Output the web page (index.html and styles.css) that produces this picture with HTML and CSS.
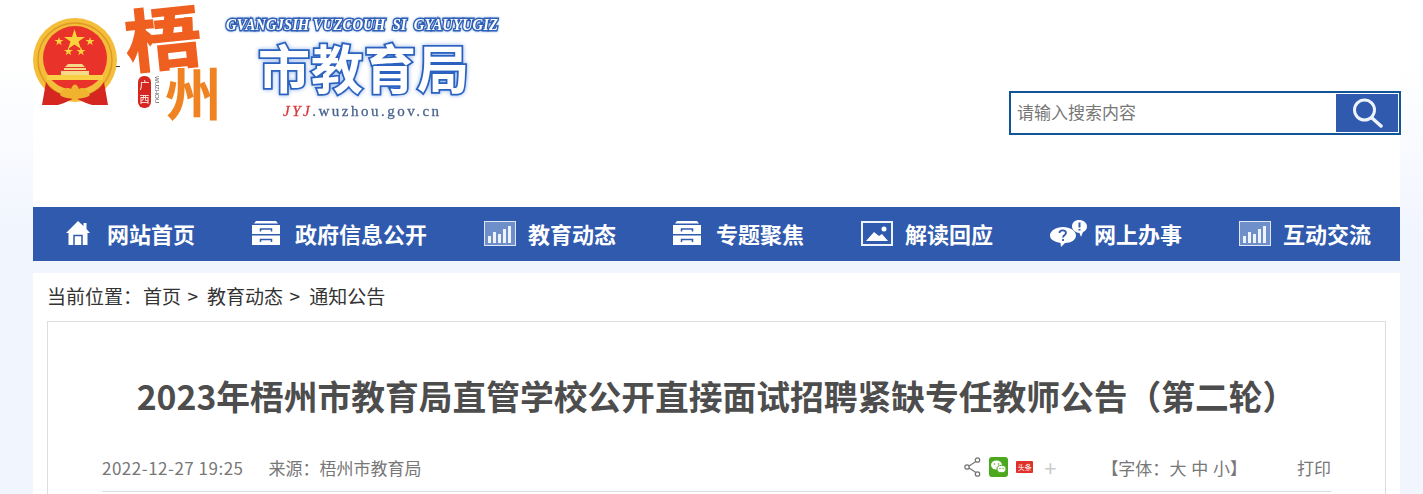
FILE: index.html
```html
<!DOCTYPE html>
<html lang="zh-CN">
<head>
    <meta charset="UTF-8">
    <meta name="viewport" content="width=device-width, initial-scale=1.0">
    <title>2023年梧州市教育局直管学校公开直接面试招聘紧缺专任教师公告（第二轮）</title>
    <link rel="stylesheet" href="styles.css">
</head>
<body>
    <div class="wrap">
        <header class="header">
            <svg class="logo" viewBox="33 0 475 130" width="475" height="130">
                <!-- emblem -->
                <circle cx="75" cy="60" r="42" fill="#f4bd3a"/>
                <circle cx="75" cy="60" r="37" fill="none" stroke="#dd9a22" stroke-width="1.500"/>
                <circle cx="75" cy="58" r="32" fill="#e8322a"/>
                <polygon points="74.500,29 77,37 85,37 78.500,41.500 81,49 74.500,44.500 68,49 70.500,41.500 64,37 72,37" fill="#f9d23c"/>
                <polygon points="59,37 60,40 63.500,40 60.700,42 61.700,45.200 59,43.200 56.300,45.200 57.300,42 54.500,40 58,40" fill="#f9d23c"/>
                <polygon points="90,37 91,40 94.500,40 91.700,42 92.700,45.200 90,43.200 87.300,45.200 88.300,42 85.500,40 89,40" fill="#f9d23c"/>
                <polygon points="68.500,47 69.500,50 73,50 70.200,52 71.200,55.200 68.500,53.200 65.800,55.200 66.800,52 64,50 67.500,50" fill="#f9d23c"/>
                <polygon points="81,47 82,50 85.500,50 82.700,52 83.700,55.200 81,53.200 78.300,55.200 79.300,52 76.500,50 80,50" fill="#f9d23c"/>
                <path d="M68 64 H82 L85 67 H65 Z M64 68 H86 V70 H64 Z M61 71 H89 V75 H61 Z" fill="#f7d98a"/>
                <rect x="47" y="75" width="56" height="5" fill="#f8cf45"/>
                <path d="M46 82 L42 105 H58 L64 103 L75 98 L86 103 L92 105 H108 L104 82 C98 92 88 96 75 96 C62 96 52 92 46 82 Z" fill="#d5261f"/>
                <path d="M60 95 C63 88 68 87 71 89 C73 83 77 83 79 89 C82 87 87 88 90 95 C86 99 81 97 75 100 C69 97 64 99 60 95 Z" fill="#f0b32e"/>
                <rect x="116" y="66" width="4" height="1" fill="#444"/>

                <!-- city name -->
                <text class="logo-wu" transform="translate(128 68) rotate(-6) scale(1.12 1)">梧</text>
                <text class="logo-zhou" transform="translate(165 116) scale(1.18 1.2)">州</text>
                <rect x="138" y="76" width="13" height="32" rx="6" fill="#d5261f"/>
                <text class="logo-gx" x="139.500" y="89">广</text>
                <text class="logo-gx" x="139.500" y="103">西</text>
                <text class="logo-wz" transform="translate(155 76) rotate(90)">WUZHOU</text>

                <!-- bureau name -->
                <text class="logo-zh" x="226" y="30" textLength="272" lengthAdjust="spacingAndGlyphs">GVANGJSIH VUZCOUH  SI  GYAUYUGIZ</text>
                <text class="logo-title" x="258" y="89">市教育局</text>
                <text class="logo-url" x="283" y="116"><tspan class="logo-url-red">JYJ</tspan>.wuzhou.gov.cn</text>
            </svg>
            <form class="search">
                <input class="search-input" type="text" placeholder="请输入搜索内容">
                <button class="search-btn" type="button" aria-label="搜索">
                    <svg viewBox="0 0 32 32" width="32" height="32">
                        <circle cx="13.500" cy="13" r="10" fill="none" stroke="#eef3fb" stroke-width="3"/>
                        <path d="M21 21 L30 29" stroke="#eef3fb" stroke-width="3.500" stroke-linecap="round"/>
                    </svg>
                </button>
            </form>
        </header>

        <nav class="nav">
            <a class="nav-item" href="#">
                <svg class="ico ico-home" viewBox="0 0 26 26" width="26" height="26"><path d="M13 1 L18.500 6 V3 H21.500 V9 L25 13 H22.500 V25 H3.500 V13 H1 Z" fill="#fff"/><path d="M9 25 V15.500 H17 V25" fill="none" stroke="#2f5aae" stroke-width="1.500"/></svg>
                网站首页
            </a>
            <a class="nav-item nav-item-wide" href="#">
                <svg class="ico" viewBox="0 0 28 26" width="28" height="26"><path d="M4 1 H24 L26 3.500 H2 Z M0 5 H28 V14 H0 Z M0 15.500 H28 V25 H0 Z" fill="#fff"/><path d="M8.500 11.500 V9 H19.500 V11.500 M8.500 22 V19.500 H19.500 V22" fill="none" stroke="#2f5aae" stroke-width="1.500"/></svg>
                政府信息公开
            </a>
            <a class="nav-item" href="#">
                <svg class="ico" viewBox="0 0 32 25" width="32" height="25"><rect x="0.500" y="0.500" width="31" height="24" fill="#6f8fcb" stroke="#dfe7f5"/><path d="M4 22 V15 H7 V22 Z M9 22 V11 H12 V22 Z M14 22 V13 H17 V22 Z M19 22 V8 H22 V22 Z M24 22 V5 H27 V22 Z" fill="#eef2fa"/></svg>
                教育动态
            </a>
            <a class="nav-item nav-item-wide" href="#">
                <svg class="ico" viewBox="0 0 28 26" width="28" height="26"><path d="M4 1 H24 L26 3.500 H2 Z M0 5 H28 V14 H0 Z M0 15.500 H28 V25 H0 Z" fill="#fff"/><path d="M8.500 11.500 V9 H19.500 V11.500 M8.500 22 V19.500 H19.500 V22" fill="none" stroke="#2f5aae" stroke-width="1.500"/></svg>
                专题聚焦
            </a>
            <a class="nav-item" href="#">
                <svg class="ico" viewBox="0 0 32 25" width="32" height="25"><rect x="1" y="1" width="30" height="23" fill="none" stroke="#eef2fa" stroke-width="2"/><path d="M5 20 L13 11 L18 15 L21 13 L27 20 Z" fill="#fff"/><circle cx="23" cy="8" r="2.500" fill="#fff"/></svg>
                解读回应
            </a>
            <a class="nav-item nav-item-tight" href="#">
                <svg class="ico" viewBox="0 0 37 27" width="37" height="27"><path d="M13 7 C20 7 26 11 26 15.500 C26 20 21 23 15 23 L11 27 L10.500 23 C5 22 0 20 0 15.500 C0 11 6 7 13 7 Z" fill="#fff"/><path d="M29 0 C33 0 37 2.500 37 6.500 C37 9.500 35 11 33 12 L31 17 L29.500 13 C26 13 22 10 22 6.500 C22 2.500 25 0 29 0 Z" fill="#fff"/><path d="M9.500 13 C9.500 9.500 16 9.500 16 13 C16 15 13 15 13 17.500" fill="none" stroke="#2f5aae" stroke-width="1.800"/><path d="M13 19 V21" stroke="#2f5aae" stroke-width="1.800"/><path d="M29.500 2.500 V7.500 M29.500 9 V10.500" stroke="#2f5aae" stroke-width="2"/></svg>
                网上办事
            </a>
            <a class="nav-item" href="#">
                <svg class="ico" viewBox="0 0 32 25" width="32" height="25"><rect x="0.500" y="0.500" width="31" height="24" fill="#6f8fcb" stroke="#dfe7f5"/><path d="M4 22 V15 H7 V22 Z M9 22 V11 H12 V22 Z M14 22 V13 H17 V22 Z M19 22 V8 H22 V22 Z M24 22 V5 H27 V22 Z" fill="#eef2fa"/></svg>
                互动交流
            </a>
        </nav>

        <main class="panel">
            <div class="crumbs"><span class="crumbs-label">当前位置：</span><a href="#">首页</a><span class="sep">&gt;</span><a href="#">教育动态</a><span class="sep">&gt;</span><a href="#">通知公告</a></div>
            <article class="article">
                <h1 class="article-title">2023年梧州市教育局直管学校公开直接面试招聘紧缺专任教师公告（第二轮）</h1>
                <div class="meta">
                    <span class="meta-date">2022-12-27 19:25</span>
                    <span class="meta-source">来源：梧州市教育局</span>
                    <div class="share">
                        <svg viewBox="0 0 17 20" width="17" height="20"><path d="M13.500 3.500 L3.500 10 L13.500 16.500" fill="none" stroke="#777" stroke-width="1.200"/><circle cx="13.500" cy="3" r="2.200" fill="#fff" stroke="#777" stroke-width="1.300"/><circle cx="3" cy="10" r="2.200" fill="#fff" stroke="#777" stroke-width="1.300"/><circle cx="13.500" cy="17" r="2.200" fill="#fff" stroke="#777" stroke-width="1.300"/></svg>
                        <svg viewBox="0 0 19 20" width="19" height="20"><rect width="19" height="20" rx="3" fill="#4ca81f"/><ellipse cx="7.500" cy="8" rx="5.500" ry="4.500" fill="#fff"/><ellipse cx="12.500" cy="12" rx="4.500" ry="3.700" fill="#fff" stroke="#4ca81f"/><circle cx="5.500" cy="7" r="0.800" fill="#4ca81f"/><circle cx="9.500" cy="7" r="0.800" fill="#4ca81f"/><circle cx="11" cy="11.500" r="0.700" fill="#4ca81f"/><circle cx="14" cy="11.500" r="0.700" fill="#4ca81f"/></svg>
                        <span class="share-tt">头条</span>
                        <span class="share-more">+</span>
                    </div>
                    <div class="fontsize">【字体：<a href="#">大</a> <a href="#">中</a> <a href="#">小</a>】</div>
                    <a class="print" href="#">打印</a>
                </div>
            </article>
        </main>
    </div>
</body>
</html>
```

FILE: styles.css
```css
html, body {
    height: 494px;
    overflow: hidden;
}

body {
    margin: 0;
    font-family: "Noto Sans CJK SC", "Liberation Sans", sans-serif;
    background: linear-gradient(#fff 0, #fff 60px, #f1f5fe 240px);
    color: #333;
}

a {
    color: inherit;
    text-decoration: none;
}

.wrap {
    width: 1367px;
    margin-left: 33px;
}

.header {
    display: flex;
    justify-content: space-between;
    align-items: flex-start;
    height: 207px;
    background: #fff;
}

.logo {
    display: block;
    filter: blur(0.3px);
}

.logo-wu {
    font-size: 68px;
    font-weight: 700;
    fill: #ef5f1f;
    stroke: #ef5f1f;
    stroke-width: 1.500px;
}

.logo-zhou {
    font-size: 48px;
    font-weight: 700;
    fill: #ef8324;
}

.logo-gx {
    font-size: 10px;
    fill: #fff;
}

.logo-wz {
    font-family: "Liberation Sans", sans-serif;
    font-size: 6px;
    fill: #555;
}

.logo-zh {
    font-family: "Liberation Serif", serif;
    font-size: 17px;
    font-style: italic;
    font-weight: 700;
    fill: #fff;
    stroke: #2f5fb5;
    stroke-width: 3px;
    paint-order: stroke;
    white-space: pre;
    filter: drop-shadow(0 0 1px #8fb0e8);
}

.logo-title {
    font-size: 52px;
    font-weight: 700;
    letter-spacing: 1px;
    fill: #fff;
    stroke: #2b62c0;
    stroke-width: 3.500px;
    paint-order: stroke;
    filter: drop-shadow(0 0 2px #8fb0e8);
}

.logo-url {
    font-family: "Liberation Serif", serif;
    font-size: 15px;
    letter-spacing: 2.500px;
    fill: #4a648f;
    stroke: #4a648f;
    stroke-width: 0.300px;
}

.logo-url-red {
    font-style: italic;
    fill: #d9363a;
    stroke: #d9363a;
}

.search {
    display: flex;
    box-sizing: border-box;
    width: 392px;
    height: 44px;
    margin-top: 91px;
    margin-right: -1px;
    padding: 1px;
    border: 2px solid #0f5597;
    background: #fff;
}

.search-input {
    flex: 1;
    min-width: 0;
    padding: 0 5px 4px;
    border: 0;
    outline: 0;
    font: 17px "Noto Sans CJK SC", sans-serif;
}

.search-input::placeholder {
    color: #777;
    opacity: 1;
}

.search-btn {
    display: flex;
    align-items: center;
    justify-content: center;
    width: 62px;
    padding: 0;
    border: 0;
    background: #2f5aae;
}

.nav {
    display: flex;
    align-items: center;
    box-sizing: border-box;
    height: 54px;
    padding: 0 0 2px 32px;
    background: #2f5aae;
}

.nav-item {
    display: flex;
    align-items: center;
    gap: 12px;
    margin-right: 57px;
    font-size: 22px;
    font-weight: 700;
    color: #fff;
    white-space: nowrap;
}

.nav-item-wide {
    gap: 15px;
}

.nav-item-tight {
    gap: 7px;
}

.ico-home {
    margin-right: 4px;
}

.panel {
    height: 221px;
    margin-top: 12px;
    padding: 0 14px;
    background: #fff;
}

.crumbs {
    height: 48px;
    font-size: 19px;
    line-height: 46px;
}

.crumbs-label {
    margin-right: 1px;
}

.sep {
    margin: 0 9px 0 6.500px;
}

.article {
    height: 173px;
    padding: 0 54px;
    border: 1px solid #ddd;
    border-bottom: 0;
}

.article-title {
    margin: 48px -10px 0;
    font-size: 33.750px;
    line-height: 52px;
    font-weight: 700;
    text-align: center;
    color: #4d4d4d;
    white-space: nowrap;
}

.meta {
    display: flex;
    align-items: center;
    height: 48px;
    margin-top: 21px;
    border-bottom: 1px solid #ddd;
    font-size: 17px;
    color: #777;
}

.meta-date {
    letter-spacing: 0.500px;
}

.meta-source {
    margin-left: 25px;
}

.share {
    display: flex;
    align-items: center;
    gap: 8px;
    margin-left: auto;
}

.share-tt {
    width: 17px;
    height: 12px;
    background: #e0302a;
    border-radius: 1px;
    font-size: 7px;
    line-height: 12px;
    text-align: center;
    color: #fff;
}

.share-more {
    margin-left: 3px;
    font-size: 22px;
    line-height: 20px;
    color: #ccc;
}

.fontsize {
    margin-left: 45px;
    word-spacing: 1px;
}

.print {
    margin-left: 50px;
}
```
